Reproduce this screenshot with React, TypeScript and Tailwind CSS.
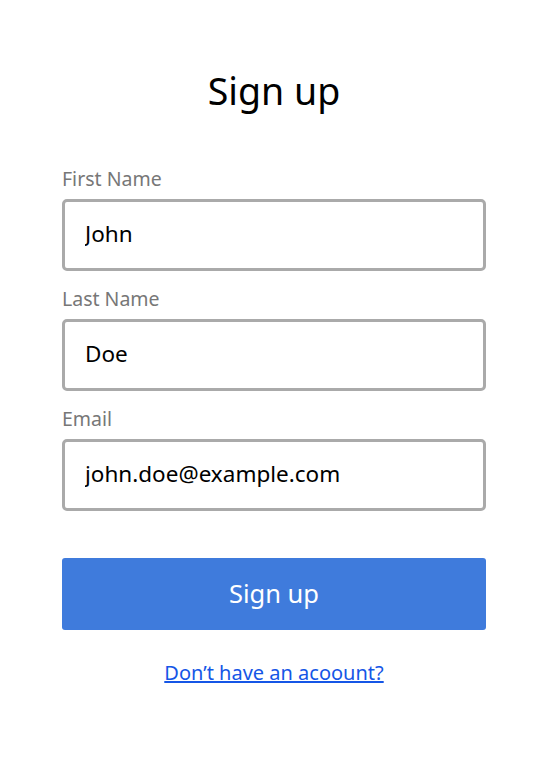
const fields = [
  { label: "First Name", value: "John" },
  { label: "Last Name", value: "Doe" },
  { label: "Email", value: "john.doe@example.com" },
];

export default function App() {
  return (
    <div className="min-h-screen bg-white font-['Noto_Sans','Open_Sans',sans-serif]">
      <div className="mx-auto w-[424px] pt-[66px]">
        <h1 className="text-center text-[37.5px] leading-[50px] text-black">Sign up</h1>

        <form className="mt-[51px] flex flex-col gap-[16px]">
          {fields.map((f) => (
            <div key={f.label} className="flex flex-col">
              <label className="text-[19.5px] leading-[24px] text-[#777]">{f.label}</label>
              <input
                readOnly
                value={f.value}
                className="mt-[8px] h-[72px] w-full rounded-[5px] border-[3px] border-[#aaa] px-[20px] pb-[3px] text-[22.5px] text-black outline-none"
              />
            </div>
          ))}

          <button
            type="button"
            className="mt-[31px] h-[72px] w-full rounded-[3px] bg-[#3f7bdc] pb-[2px] text-[25.5px] text-white"
          >
            Sign up
          </button>
        </form>

        <div className="mt-[29px] flex justify-center">
          <a href="#" className="text-[20px] leading-[28px] text-[#1556e6] underline">
            Don’t have an acoount?
          </a>
        </div>
      </div>
    </div>
  );
}
